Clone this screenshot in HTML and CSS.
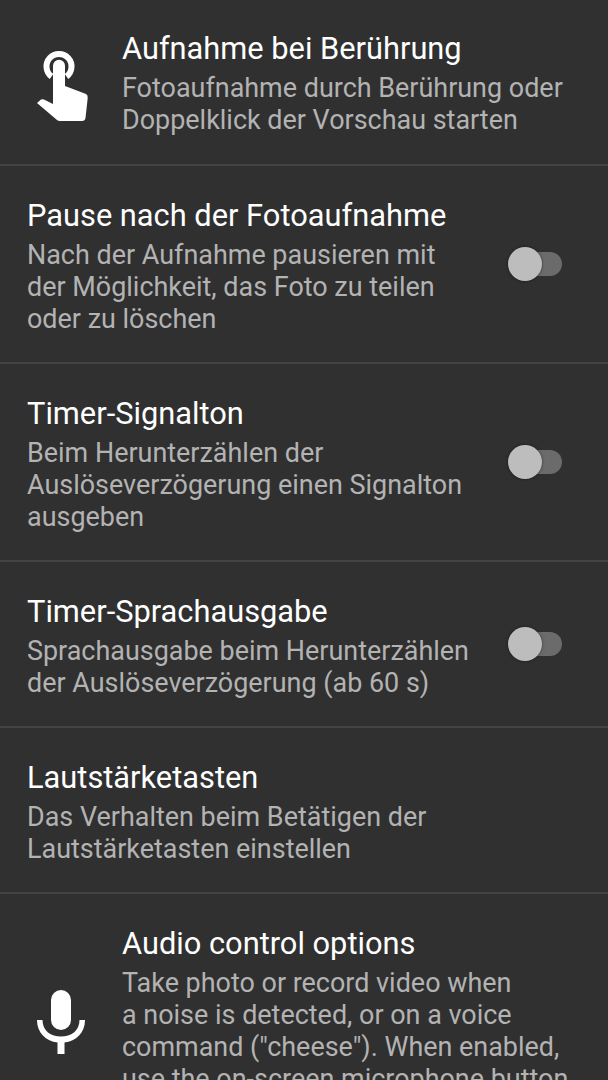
FILE: index.html
```html
<!DOCTYPE html>
<html>
<head>
    <title>Einstellungen</title>
    <link rel="stylesheet" href="styles.css">
</head>
<body>
    <div class="pref pref-first">
        <div class="pref-icon">
            <svg width="54" height="74" viewBox="0 0 54 74">
                <path class="ring" d="M15.500 27.500A12.500 12.500 0 1 1 30.500 27.500"/>
                <path class="fill" d="M17 16.700a6 6 0 0 1 12 0V37L50 45Q52 46 51.700 49L49.500 69Q49 72 46 72H24Q22 72 21 71L1 54L5 50.500Q6 50 8 50.500L17 55z"/>
            </svg>
        </div>
        <div class="pref-text">
            <div class="pref-title">Aufnahme bei Berührung</div>
            <div class="pref-summary">Fotoaufnahme durch Berührung oder<br>Doppelklick der Vorschau starten</div>
        </div>
    </div>

    <div class="pref">
        <div class="pref-text">
            <div class="pref-title">Pause nach der Fotoaufnahme</div>
            <div class="pref-summary">Nach der Aufnahme pausieren mit<br>der Möglichkeit, das Foto zu teilen<br>oder zu löschen</div>
        </div>
        <div class="switch"><div class="switch-thumb"></div></div>
    </div>

    <div class="pref">
        <div class="pref-text">
            <div class="pref-title">Timer-Signalton</div>
            <div class="pref-summary">Beim Herunterzählen der<br>Auslöseverzögerung einen Signalton<br>ausgeben</div>
        </div>
        <div class="switch"><div class="switch-thumb"></div></div>
    </div>

    <div class="pref">
        <div class="pref-text">
            <div class="pref-title">Timer-Sprachausgabe</div>
            <div class="pref-summary">Sprachausgabe beim Herunterzählen<br>der Auslöseverzögerung (ab 60 s)</div>
        </div>
        <div class="switch"><div class="switch-thumb"></div></div>
    </div>

    <div class="pref">
        <div class="pref-text">
            <div class="pref-title">Lautstärketasten</div>
            <div class="pref-summary">Das Verhalten beim Betätigen der<br>Lautstärketasten einstellen</div>
        </div>
    </div>

    <div class="pref pref-last">
        <div class="pref-icon">
            <svg width="48" height="64" viewBox="0 0 48 64">
                <rect class="fill" x="14" y="0" width="20" height="40" rx="10"/>
                <path class="fill" d="M0 30h5.500c0 11 8.500 16.500 18.500 16.500s18.500-5.500 18.500-16.500H48c0 13-9 21-20.500 22.500V64h-7V52.500C9 51 0 43 0 30z"/>
            </svg>
        </div>
        <div class="pref-text">
            <div class="pref-title">Audio control options</div>
            <div class="pref-summary">Take photo or record video when<br>a noise is detected, or on a voice<br>command ("cheese"). When enabled,<br>use the on-screen microphone button</div>
        </div>
    </div>
</body>
</html>
```

FILE: styles.css
```css
html, body {
    height: 1080px;
    overflow: hidden;
}

body {
    margin: 0;
    background-color: #303030;
    font-family: Roboto, sans-serif;
}

.pref {
    display: flex;
    align-items: center;
    justify-content: space-between;
    padding: 0 46px 0 27px;
    border-bottom: 2px solid #444444;
}

.pref-text {
    padding: 32px 0 27px;
}

.pref-first {
    justify-content: flex-start;
}

.pref-first .pref-text {
    padding: 31px 0 28px;
}

.pref-last {
    justify-content: flex-start;
    align-items: flex-start;
    border-bottom: none;
}

.pref-icon {
    width: 95px;
    flex-shrink: 0;
    display: flex;
    padding: 8px 0 0 9px;
    box-sizing: border-box;
}

.pref-last .pref-icon {
    padding: 96px 0 0 10px;
}

.pref-title {
    color: #ffffff;
    font-size: 30.8px;
    line-height: 36px;
}

.pref-summary {
    margin-top: 5px;
    color: #b3b3b3;
    font-size: 26.95px;
    line-height: 32px;
    white-space: nowrap;
}

.fill {
    fill: #ffffff;
}

.ring {
    fill: none;
    stroke: #ffffff;
    stroke-width: 6;
}

.switch {
    position: relative;
    width: 52px;
    height: 24px;
    border-radius: 12px;
    background-color: #6b6b6b;
    flex-shrink: 0;
}

.switch-thumb {
    position: absolute;
    left: -2px;
    top: -5px;
    width: 34px;
    height: 34px;
    border-radius: 50%;
    background-color: #bdbdbd;
    box-shadow: 0 0 3px rgba(0, 0, 0, 0.5);
}
```
